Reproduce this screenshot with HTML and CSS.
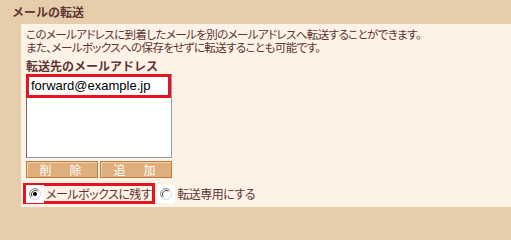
FILE: index.html
```html
<!DOCTYPE html>
<html lang="ja">
<head>
<meta charset="utf-8">
<link rel="stylesheet" href="styles.css">
</head>
<body>
<div class="header"><h1 class="title">メールの転送</h1></div>
<div class="panel">
  <p class="desc">このメールアドレスに到着したメールを別のメールアドレスへ転送することができます。<br>また、メールボックスへの保存をせずに転送することも可能です。</p>
  <div class="label">転送先のメールアドレス</div>
  <div class="listbox">
    <div class="item hl-item">forward@example.jp</div>
  </div>
  <div class="buttons">
    <button class="btn">削　除</button>
    <button class="btn">追　加</button>
  </div>
  <div class="radios">
    <label class="radio hl-radio">
      <span class="rbox"><svg width="12" height="12" viewBox="0 0 12 12"><path d="M2.2 9.8 A5.3 5.3 0 0 1 9.8 2.2" fill="none" stroke="#808080" stroke-width="1"/><path d="M9.8 2.2 A5.3 5.3 0 0 1 2.2 9.8" fill="none" stroke="#d8d4cc" stroke-width="1"/><path d="M3 8.5 A4 4 0 0 1 8.5 3" fill="none" stroke="#404040" stroke-width="1"/><circle cx="6" cy="6" r="2" fill="#000"/></svg></span>
      <span class="rtext">メールボックスに残す</span>
    </label>
    <label class="radio">
      <span class="rbox"><svg width="12" height="12" viewBox="0 0 12 12"><path d="M2.2 9.8 A5.3 5.3 0 0 1 9.8 2.2" fill="none" stroke="#808080" stroke-width="1"/><path d="M9.8 2.2 A5.3 5.3 0 0 1 2.2 9.8" fill="none" stroke="#d8d4cc" stroke-width="1"/><path d="M3 8.5 A4 4 0 0 1 8.5 3" fill="none" stroke="#404040" stroke-width="1"/></svg></span>
      <span class="rtext">転送専用にする</span>
    </label>
  </div>
</div>
</body>
</html>
```
FILE: styles.css
```css
html, body {
  margin: 0;
  padding: 0;
}
body {
  background: #e6cdab;
  width: 511px;
  height: 207px;
  overflow: hidden;
  font-family: "Noto Sans CJK JP", "Liberation Sans", sans-serif;
  font-size: 12px;
  color: #5e3434;
}
.header {
  height: 24px;
  padding-left: 12px;
  display: flex;
  align-items: center;
}
.title {
  margin: 0;
  font-size: 12px;
  font-weight: bold;
  color: #5e3434;
  line-height: 14px;
}
.panel {
  margin-left: 21px;
  background: #fdf2e6;
  height: 183px;
  padding: 4px 0 0 5px;
  box-sizing: border-box;
}
.desc {
  margin: 0;
  font-size: 11.5px;
  line-height: 12.5px;
  font-feature-settings: "palt";
  letter-spacing: -0.6px;
}
.label {
  margin-top: 6px;
  font-weight: bold;
  line-height: 14px;
}
.listbox {
  margin-top: 1px;
  width: 146px;
  height: 84px;
  box-sizing: border-box;
  border: 1px solid #8c9cb4;
  border-left-color: #6f6a64;
  border-top-color: #6f6a64;
  background: #fff;
}
.item {
  font-family: "Liberation Sans", Arial, sans-serif;
  font-size: 13px;
  color: #000;
  line-height: 17px;
}
.hl-item {
  margin: -1px 0 0 -1px;
  width: 145px;
  height: 24px;
  box-sizing: border-box;
  border: 3px solid #e5141e;
  padding-left: 2px;
}
.buttons {
  margin-top: 3px;
  display: flex;
  gap: 2px;
}
.btn {
  width: 72px;
  height: 17px;
  padding: 0;
  box-sizing: border-box;
  background: #deae7c;
  border: 1px solid #c27a3a;
  box-shadow: inset 1px 1px 0 #f3d2ae;
  color: #fff;
  font-family: "Noto Sans CJK JP", sans-serif;
  font-size: 12px;
  line-height: 14px;
  letter-spacing: 3px;
}
.radios {
  margin-top: 5px;
  margin-left: -3px;
  display: flex;
  align-items: center;
}
.radio {
  display: flex;
  align-items: center;
  height: 21px;
  box-sizing: border-box;
}
.hl-radio {
  border: 3px solid #e5141e;
  padding-right: 1px;
}
.rbox {
  width: 18px;
  height: 18px;
  background: #fff;
  display: flex;
  align-items: center;
  justify-content: center;
  margin-left: 2px;
}
.hl-radio .rbox {
  margin-left: 0;
  width: 18px;
}
.rtext {
  margin-left: 2px;
  font-feature-settings: "palt";
  letter-spacing: -0.5px;
  line-height: 14px;
}
```
